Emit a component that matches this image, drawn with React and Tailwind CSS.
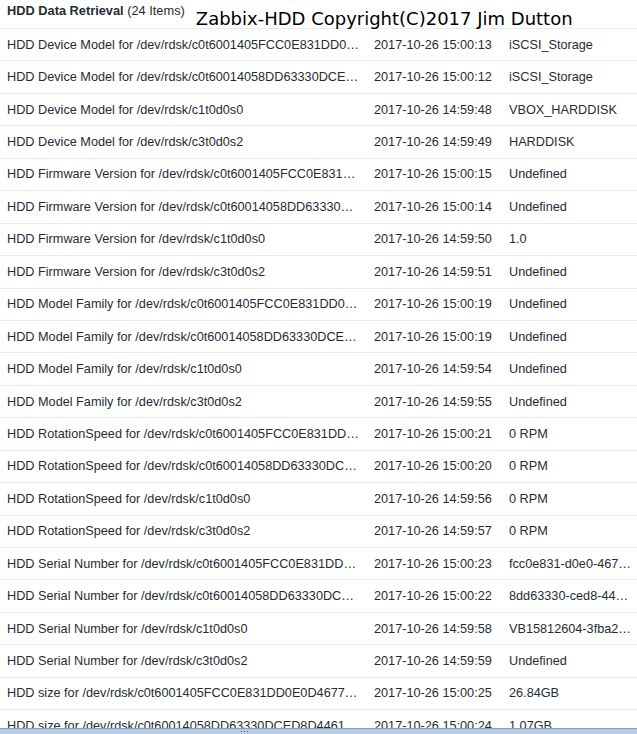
const dev1 = '/dev/rdsk/c0t6001405FCC0E831DD0E0D4677d0s2'
const dev2 = '/dev/rdsk/c0t60014058DD63330DCED8D4461d0s2'
const dev3 = '/dev/rdsk/c1t0d0s0'
const dev4 = '/dev/rdsk/c3t0d0s2'

const rows = [
  ['HDD Device Model for ' + dev1, '2017-10-26 15:00:13', 'iSCSI_Storage'],
  ['HDD Device Model for ' + dev2, '2017-10-26 15:00:12', 'iSCSI_Storage'],
  ['HDD Device Model for ' + dev3, '2017-10-26 14:59:48', 'VBOX_HARDDISK'],
  ['HDD Device Model for ' + dev4, '2017-10-26 14:59:49', 'HARDDISK'],
  ['HDD Firmware Version for ' + dev1, '2017-10-26 15:00:15', 'Undefined'],
  ['HDD Firmware Version for ' + dev2, '2017-10-26 15:00:14', 'Undefined'],
  ['HDD Firmware Version for ' + dev3, '2017-10-26 14:59:50', '1.0'],
  ['HDD Firmware Version for ' + dev4, '2017-10-26 14:59:51', 'Undefined'],
  ['HDD Model Family for ' + dev1, '2017-10-26 15:00:19', 'Undefined'],
  ['HDD Model Family for ' + dev2, '2017-10-26 15:00:19', 'Undefined'],
  ['HDD Model Family for ' + dev3, '2017-10-26 14:59:54', 'Undefined'],
  ['HDD Model Family for ' + dev4, '2017-10-26 14:59:55', 'Undefined'],
  ['HDD RotationSpeed for ' + dev1, '2017-10-26 15:00:21', '0 RPM'],
  ['HDD RotationSpeed for ' + dev2, '2017-10-26 15:00:20', '0 RPM'],
  ['HDD RotationSpeed for ' + dev3, '2017-10-26 14:59:56', '0 RPM'],
  ['HDD RotationSpeed for ' + dev4, '2017-10-26 14:59:57', '0 RPM'],
  ['HDD Serial Number for ' + dev1, '2017-10-26 15:00:23', 'fcc0e831-d0e0-4677-a2d1-0e0d46770000'],
  ['HDD Serial Number for ' + dev2, '2017-10-26 15:00:22', '8dd63330-ced8-4461-b6a4-8d4461000000'],
  ['HDD Serial Number for ' + dev3, '2017-10-26 14:59:58', 'VB15812604-3fba2f3e'],
  ['HDD Serial Number for ' + dev4, '2017-10-26 14:59:59', 'Undefined'],
  ['HDD size for ' + dev1, '2017-10-26 15:00:25', '26.84GB'],
  ['HDD size for ' + dev2, '2017-10-26 15:00:24', '1.07GB'],
]

function Row({ name, time, value }) {
  return (
    <div className="flex h-[32.45px] items-center border-b border-[#ebebeb] text-[12.7px] leading-[16px] text-[#1f2c33]">
      <div className="w-[367px] shrink-0 truncate px-[7px]">{name}</div>
      <div className="w-[135px] shrink-0 truncate px-[7px]">{time}</div>
      <div className="min-w-0 flex-1 truncate pl-[7px] pr-[3px]">{value}</div>
    </div>
  )
}

export default function App() {
  return (
    <div className="relative w-[637px] bg-white font-['Liberation_Sans',Arial,sans-serif]">
      {/* widget header */}
      <div className="flex h-[29px] items-start border-b border-[#ebebeb]">
        <div className="whitespace-nowrap pl-[7px] pt-[3px] text-[12.8px] leading-[15px] text-[#1f2c33]">
          <span className="font-bold">HDD Data Retrieval</span> (24 Items)
        </div>
        <div className="ml-[11px] mt-[8px] whitespace-nowrap font-['DejaVu_Sans',sans-serif] text-[18px] leading-[21px] text-black">
          Zabbix-HDD Copyright(C)2017 Jim Dutton
        </div>
      </div>

      {rows.map(([name, time, value]) => (
        <Row key={name} name={name} time={time} value={value} />
      ))}

      {/* resize handle bar pinned to the bottom of the frame */}
      <div className="fixed bottom-0 left-0 h-[6px] w-[637px] border-t border-[#7d9dc6] bg-[#b8cce6]">
        <div className="flex justify-center gap-[2px] pt-[2px] pr-[148px]">
          <span className="h-px w-px bg-[#555]" />
          <span className="h-px w-px bg-[#555]" />
          <span className="h-px w-px bg-[#555]" />
        </div>
      </div>
    </div>
  )
}
